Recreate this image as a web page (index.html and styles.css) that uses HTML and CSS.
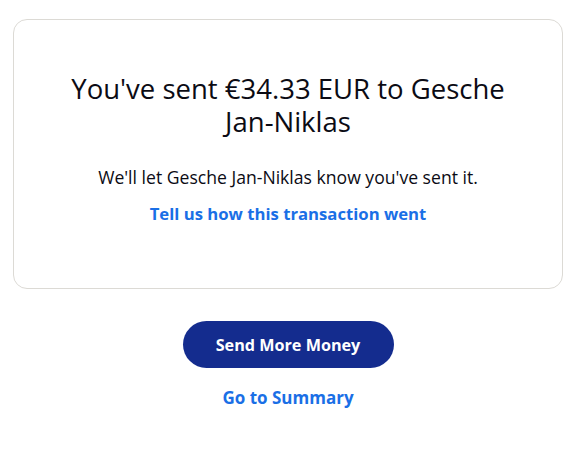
FILE: index.html
```html
<!DOCTYPE html>
<html lang="en">
<head>
<meta charset="utf-8">
<title>Sent</title>
<link rel="stylesheet" href="styles.css">
</head>
<body>
<main class="page">
  <section class="card">
    <h1 class="title">You've sent €34.33 EUR to Gesche Jan-Niklas</h1>
    <p class="note">We'll let Gesche Jan-Niklas know you've sent it.</p>
    <a class="link" href="#">Tell us how this transaction went</a>
  </section>
  <div class="actions">
    <a class="btn" href="#">Send More Money</a>
    <a class="link link-summary" href="#">Go to Summary</a>
  </div>
</main>
</body>
</html>
```

FILE: styles.css
```css
html, body {
  margin: 0;
  padding: 0;
  background: #ffffff;
}
body {
  font-family: "Open Sans", Lato, sans-serif;
  color: #001435;
}
.page {
  padding: 19px 15px 0 13px;
  display: flex;
  flex-direction: column;
  align-items: stretch;
}
.card {
  border: 1px solid #dcdad5;
  border-radius: 14px;
  padding: 52px 40px 63px;
  display: flex;
  flex-direction: column;
  align-items: center;
  text-align: center;
}
.title {
  margin: 0;
  font-size: 27.5px;
  line-height: 33px;
  font-weight: 400;
  color: #0b0b14;
  max-width: 450px;
}
.note {
  margin: 28px 0 0;
  font-size: 17.6px;
  line-height: 22px;
  color: #0b0b14;
}
.link {
  color: #1a6fe6;
  font-weight: 700;
  font-size: 16.7px;
  text-decoration: none;
  line-height: 22px;
  margin-top: 15px;
}
.actions {
  display: flex;
  flex-direction: column;
  align-items: center;
  margin-top: 32px;
}
.btn {
  display: flex;
  align-items: center;
  justify-content: center;
  width: 211px;
  height: 47px;
  border-radius: 24px;
  background: #142c8e;
  color: #ffffff;
  font-weight: 700;
  font-size: 16.2px;
  text-decoration: none;
}
.link-summary {
  margin-top: 19px;
  font-size: 17px;
}
```
